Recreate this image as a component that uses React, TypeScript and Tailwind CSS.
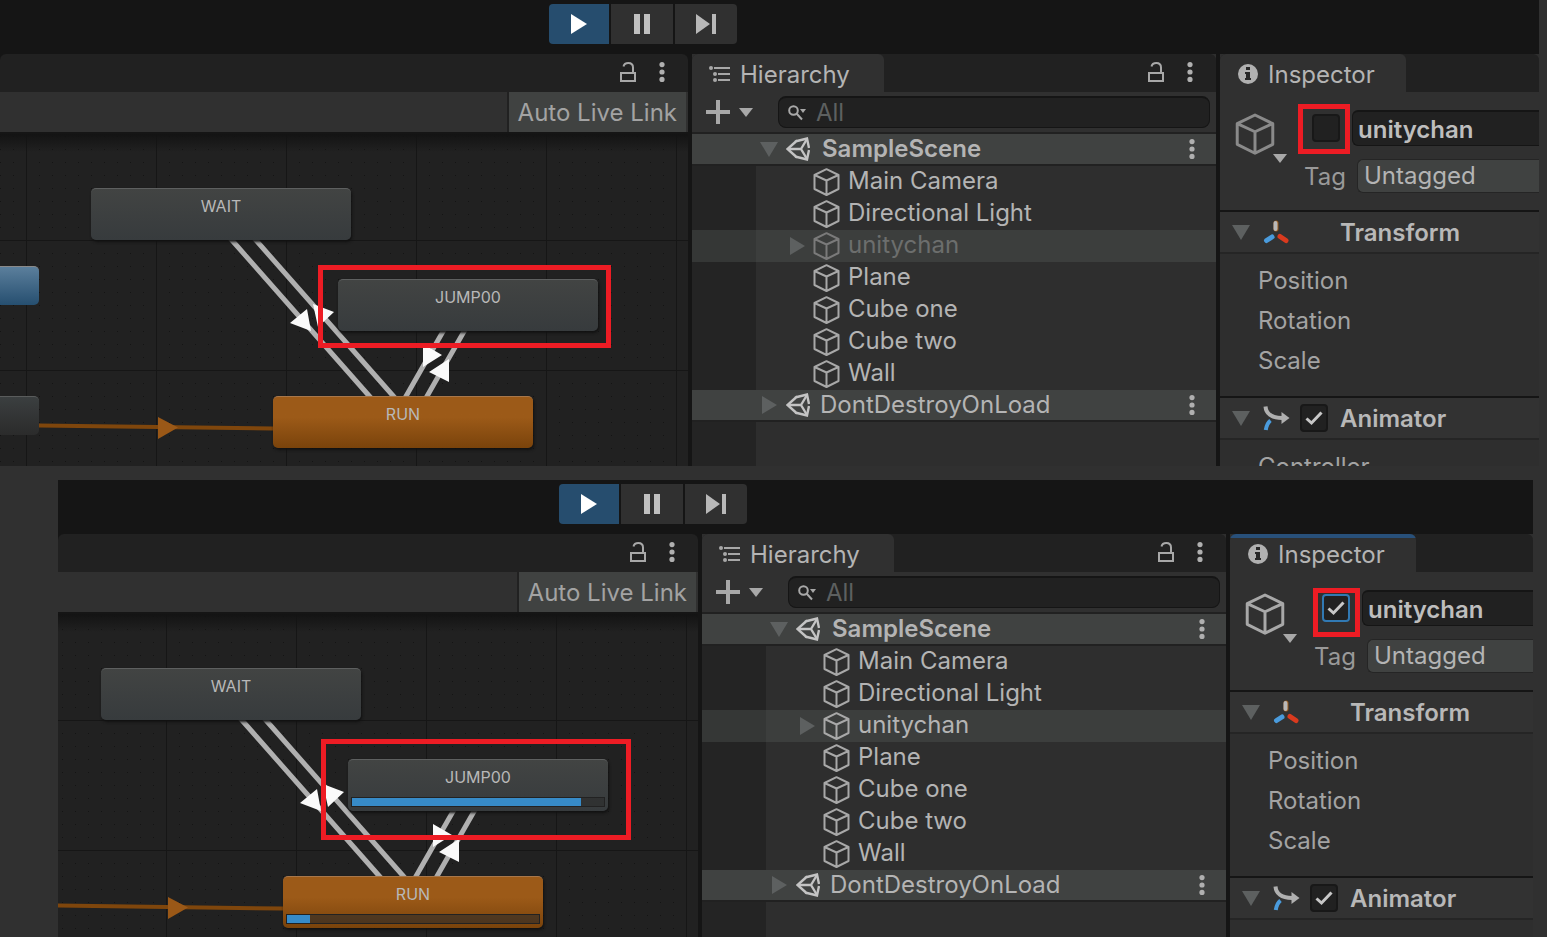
import type { ReactNode } from "react";
import clsx from "clsx";

type EditorProps = {
  id: string;
  running: boolean;
  className: string;
  transportClass: string;
  inspectorClass: string;
};

const sceneObjects = ["Main Camera", "Directional Light", "unitychan", "Plane", "Cube one", "Cube two", "Wall"];

/* Icons */

const LockIcon = () => (
  <svg width="16" height="20" viewBox="0 0 16 20" fill="none" stroke="#a8a8a8" strokeWidth="2">
    <rect x="1" y="11" width="14" height="8" />
    <path d="M3.5 4.5C4 2 6 1 8.300 1 11.500 1 13 3 13 5.500V11" />
  </svg>
);

const DotsIcon = () => (
  <svg width="6" height="20" viewBox="0 0 6 20" fill="#b0b0b0">
    <circle cx="3" cy="2.6" r="2.6" />
    <circle cx="3" cy="10" r="2.6" />
    <circle cx="3" cy="17.4" r="2.6" />
  </svg>
);

const ListIcon = () => (
  <svg width="22" height="18" viewBox="0 0 22 18" fill="#a8a8a8">
    <circle cx="3" cy="2" r="2" />
    <circle cx="7" cy="8" r="2" />
    <circle cx="7" cy="14" r="2" />
    <path d="M6 1h16v2H6zM10 7h12v2H10zM10 13h12v2H10z" />
  </svg>
);

const CubeIcon = ({ className }: { className: string }) => (
  <svg className={className} viewBox="0 0 27 28" fill="none" strokeLinejoin="round">
    <path d="M13.500 1.200 25.500 7v14l-12 6-12-6V7zM1.500 7l12 5.500L25.500 7M13.500 12.500V27" />
  </svg>
);

const UnityIcon = () => (
  <svg width="24" height="24" viewBox="0 0 24 24" fill="none" stroke="#c4c4c4" strokeWidth="2.4">
    <path d="M9 4.500 21 1.500 23 11M23 13 21 22.500 9 19.500M11 3.500 1.500 12 11 20.500" />
    <path d="M2 12h13M15 12 21 2M15 12l6 10" />
  </svg>
);

const Triangle = ({ open }: { open?: boolean }) => (
  <svg width="18" height="18" viewBox="0 0 18 18" fill="#5d6060">
    <path d={open ? "M0 2h18L9 17z" : "M2 0v18l15-9z"} />
  </svg>
);

const Caret = () => (
  <svg width="14" height="9" viewBox="0 0 14 9" fill="#a8a8a8">
    <path d="M0 0h14L7 9z" />
  </svg>
);

const TransformIcon = () => (
  <svg width="26" height="24" viewBox="0 0 26 24" strokeLinecap="round" strokeWidth="5">
    <path d="M13 3v6" stroke="#9a5817" />
    <path d="M12.500 3v6" stroke="#b8b8b8" strokeWidth="4" />
    <path d="m9 17-5.500 3.500" stroke="#4a9bdc" />
    <path d="m17 16.500 6 4" stroke="#d93a1e" />
  </svg>
);

const AnimatorIcon = () => (
  <svg width="27" height="26" viewBox="0 0 27 26" fill="none">
    <path d="M2.500 1.500C3 8 8 13 19 13" stroke="#b0b0b0" strokeWidth="4" />
    <path d="M18.500 7v12l8-6z" fill="#b0b0b0" />
    <path d="M7.500 15.500C5 17.500 3.500 20 2.800 25" stroke="#4a9bdc" strokeWidth="4" />
  </svg>
);

/* Shared parts */

const TabBar = ({ children, actions }: { children?: ReactNode; actions?: boolean }) => (
  <div className="flex h-[38px] shrink-0 justify-between rounded-t-md bg-[#212121]">
    <div className="flex">{children}</div>
    {actions && (
      <div className="flex items-center gap-[23px] pr-[23px] pb-[2px]">
        <button aria-label="Lock panel"><LockIcon /></button>
        <button aria-label="Panel menu"><DotsIcon /></button>
      </div>
    )}
  </div>
);

const Toggle = ({ label, checked, focused }: { label: string; checked: boolean; focused?: boolean }) => (
  <span className="relative block size-7 shrink-0">
    <input
      type="checkbox"
      aria-label={label}
      defaultChecked={checked}
      className={clsx(
        "peer block size-7 appearance-none rounded border-2 bg-[#212121]",
        focused ? "border-[#3179b3]" : "border-[#181818]"
      )}
    />
    <svg
      className="pointer-events-none absolute inset-0 hidden peer-checked:block"
      viewBox="0 0 28 28"
      fill="none"
      stroke="#c8c8c8"
      strokeWidth="3"
    >
      <path d="m6.500 14.500 5 4.500L21.500 8.500" />
    </svg>
  </span>
);

/* Animator graph */

const StateNode = ({ name, className, progress }: { name: string; className: string; progress?: number }) => (
  <div
    className={clsx(
      "absolute h-[52px] w-[260px] rounded-[5px] border-t bg-linear-to-b pt-[5px] text-center text-base leading-6 text-[#b8b8b8] shadow-[1px_2px_3px_#111111]",
      className
    )}
  >
    {name}
    {progress !== undefined && (
      <div className="absolute inset-x-[3px] bottom-[4px] h-[10px] border border-[#222222] bg-[#2b2b2b]/60">
        <div className="h-full bg-[#378bc8]" style={{ width: `${progress}%` }} />
      </div>
    )}
  </div>
);

const Graph = ({ id, running }: { id: string; running: boolean }) => (
  <section className="flex min-w-0 flex-1 flex-col">
    <TabBar actions />
    <div className="flex h-[42px] shrink-0 justify-end border-b-2 border-[#151515] bg-[#303030] pr-[2px]">
      <button className="border-l-2 border-[#212121] bg-[#404241] px-[9px] pt-[2px] text-2xl text-[#a3a3a3]">
        Auto Live Link
      </button>
    </div>
    <div className="relative flex-1 overflow-hidden bg-[#212121]">
      <div className="absolute inset-y-0 right-0 w-[688px]">
        <svg className="absolute inset-0 size-full">
          <defs>
            <pattern id={`${id}-dots`} x="0" y="2" width="13" height="13" patternUnits="userSpaceOnUse">
              <rect width="1" height="1" fill="#141414" />
            </pattern>
            <pattern id={`${id}-grid`} x="26" y="106" width="130" height="130" patternUnits="userSpaceOnUse">
              <path d="M0 .5h130M.5 0v130" stroke="#161616" />
            </pattern>
            <linearGradient id={`${id}-shade`} x2="0" y2="1">
              <stop stopColor="#131313" />
              <stop offset="1" stopColor="#131313" stopOpacity="0" />
            </linearGradient>
          </defs>
          <rect width="100%" height="100%" fill={`url(#${id}-dots)`} />
          <rect width="100%" height="100%" fill={`url(#${id}-grid)`} />
          <rect width="100%" height="18" fill={`url(#${id}-shade)`} />
          <g stroke="#b0b0b0" strokeWidth="5">
            <path d="M230 104 371 264M254 104 395 264M445 194 405 264M466 194 426 264" />
          </g>
          <g fill="#fafafa">
            <path d="M290 189 307 175 311 197zM313 170 334 178 318 193z" />
            <path d="M423 210 442 221 423 233zM429 238 449 225 449 248z" />
          </g>
          <path d="M39 291.500 273 294.500" stroke="#7f460c" strokeWidth="4" />
          <path d="M158 283 178 293.500 158 305z" fill="#9a5817" />
        </svg>
        <div className="absolute left-0 top-[132px] h-[39px] w-[39px] rounded-r-[5px] border-t border-[#8a8a8a] bg-linear-to-b from-[#5b7f9c] to-[#264f70]" />
        <div className="absolute left-0 top-[262px] h-[39px] w-[39px] rounded-r-[5px] border-t border-[#5a5c5c] bg-linear-to-b from-[#3b3f40] to-[#2b2b2b]" />
        <StateNode name="WAIT" className="left-[91px] top-[54px] border-[#5e6060] from-[#424443] to-[#373b3d]" />
        <StateNode
          name="JUMP00"
          className="left-[338px] top-[145px] border-[#5e6060] from-[#424443] to-[#373b3d]"
          progress={running ? 91 : undefined}
        />
        <StateNode
          name="RUN"
          className="left-[273px] top-[262px] border-[#a8774a] from-[#9c5a18] from-40% to-[#7a430b]"
          progress={running ? 9 : undefined}
        />
        <div
          className={clsx(
            "absolute border-5 border-[#ed1c24]",
            running ? "left-[311px] top-[125px] h-[101px] w-[310px]" : "left-[318px] top-[131px] h-[83px] w-[293px]"
          )}
        />
      </div>
    </div>
  </section>
);

/* Hierarchy */

const SceneRow = ({ name, open }: { name: string; open?: boolean }) => (
  <div className="flex h-8 items-center border-b-2 border-[#212121] bg-[#404241] pr-[21px] pl-[68px]">
    <Triangle open={open} />
    <span className={clsx("ml-2", open ? "mr-3" : "mr-[10px]")}><UnityIcon /></span>
    <span className={clsx("flex-1", open && "font-semibold")}>{name}</span>
    <button aria-label={`${name} menu`}><DotsIcon /></button>
  </div>
);

const Hierarchy = ({ running }: { running: boolean }) => (
  <section className="flex w-[524px] shrink-0 flex-col bg-[#2e2e2e] text-2xl text-[#b4b4b4]">
    <TabBar actions>
      <h2 className="flex w-48 items-center gap-[10px] rounded-t-md bg-[#303030] pt-1 pl-4">
        <ListIcon />
        Hierarchy
      </h2>
    </TabBar>
    <div className="flex h-[42px] shrink-0 items-center border-b-2 border-[#212121] bg-[#303030] pr-[6px] pl-[14px]">
      <button aria-label="Create" className="flex items-center gap-[9px]">
        <svg width="24" height="24" fill="#a8a8a8">
          <path d="M10 0h4v10h10v4H14v10h-4V14H0v-4h10z" />
        </svg>
        <Caret />
      </button>
      <label className="ml-[25px] flex h-8 min-w-0 flex-1 items-center gap-[9px] rounded-lg border border-t-2 border-[#151515] bg-[#212121] pl-[9px]">
        <svg width="19" height="16" viewBox="0 0 19 16" fill="none" stroke="#a8a8a8" strokeWidth="2">
          <circle cx="5.500" cy="5.500" r="4.300" />
          <path d="m8.500 8.500 5.500 6" />
          <path d="M12 4h6l-3 4z" fill="#a8a8a8" stroke="none" />
        </svg>
        <input type="search" aria-label="Search hierarchy" placeholder="All" className="min-w-0 flex-1 bg-transparent leading-7 outline-none placeholder:text-[#5d6060]" />
      </label>
    </div>
    <SceneRow name="SampleScene" open />
    <ul>
      {sceneObjects.map((name) => {
        const selected = name === "unitychan";
        const dimmed = selected && !running;
        return (
          <li key={name} className={clsx("flex h-8", selected && "bg-[#3c3e3d]")}>
            <div className={clsx("w-16", selected ? "bg-[#353736]" : "bg-[#242424]")} />
            <div className="flex flex-1 items-center pl-8">
              <span className="w-[25px]">{selected && <Triangle />}</span>
              <CubeIcon className={clsx("h-7 w-[27px] stroke-2", dimmed ? "stroke-[#7a7a7a]" : "stroke-[#a8a8a8]")} />
              <span className={clsx("ml-2 pb-[2px]", dimmed && "text-[#6c6e6d]")}>{name}</span>
            </div>
          </li>
        );
      })}
    </ul>
    <SceneRow name="DontDestroyOnLoad" />
    <div className="w-16 flex-1 bg-[#242424]" />
  </section>
);

/* Inspector */

const ComponentHeader = ({ title, icon, toggle }: { title: string; icon: ReactNode; toggle?: boolean }) => (
  <div className="flex h-11 items-center border-y-2 border-t-[#151515] border-b-[#252525] bg-[#323232] pl-3">
    <Triangle open />
    <span className="ml-[13px] w-[37px]">{icon}</span>
    <span className="w-10">{toggle && <Toggle label={`${title} enabled`} checked />}</span>
    <h3 className="pt-[2px] font-semibold text-[#b8b8b8]">{title}</h3>
  </div>
);

const Inspector = ({ id, running, className }: { id: string; running: boolean; className: string }) => (
  <section className={clsx("shrink-0 overflow-hidden bg-[#2e2e2e] text-2xl text-[#b4b4b4]", className)}>
    <TabBar>
      <h2 className="relative flex w-[186px] items-center gap-[10px] overflow-hidden rounded-t-md bg-[#303030] pt-1 pl-[18px]">
        {running && <span className="absolute inset-x-0 top-0 h-1 bg-[#28507a]" />}
        <svg className="mb-[2px]" width="20" height="20" viewBox="0 0 20 20">
          <circle cx="10" cy="10" r="10" fill="#b0b0b0" />
          <path d="M8 3h4v3H8zM7 8h5v6h1v2H7v-2h1v-4H7z" fill="#282828" />
        </svg>
        Inspector
      </h2>
    </TabBar>
    <div className="flex h-[118px] bg-[#303030] pt-[18px] pl-[15px]">
      <button aria-label="Object icon" className="flex w-[69px] items-end self-start pt-[3px]">
        <CubeIcon className={clsx("h-[42px] w-10 stroke-2", running ? "stroke-[#a8a8a8]" : "stroke-[#8a8a8a]")} />
        <span className="-mb-2 -ml-[2px]"><Caret /></span>
      </button>
      <div className="flex min-w-0 flex-1 flex-col gap-[13px]">
        <div className="flex pl-2">
          <div className="relative mt-1 mr-3 self-start">
            <Toggle label="Active" checked={running} focused={running} />
            <div
              className={clsx(
                "pointer-events-none absolute border-5 border-[#ed1c24]",
                running ? "-left-[9px] -top-[6px] h-[49px] w-[47px]" : "-left-[14px] -top-[10px] h-[50px] w-[52px]"
              )}
            />
          </div>
          <input
            aria-label="Object name"
            defaultValue="unitychan"
            className="h-9 min-w-0 flex-1 rounded-l-md border border-r-0 border-t-2 border-[#151515] bg-[#212121] pt-[2px] pl-[5px] font-semibold text-[#bebebe] outline-none"
          />
        </div>
        <div className="flex h-[34px] items-center">
          <label htmlFor={`${id}-tag`} className="w-[53px] pt-[2px] text-[#999999]">Tag</label>
          <select
            id={`${id}-tag`}
            className="h-[34px] min-w-0 flex-1 appearance-none rounded-l-md border border-r-0 border-[#252525] bg-[#404241] pl-[6px] leading-8"
          >
            <option>Untagged</option>
          </select>
        </div>
      </div>
    </div>
    <ComponentHeader title="Transform" icon={<TransformIcon />} />
    <div className="flex h-[142px] flex-col pt-[7px] pl-[38px] leading-10 text-[#a3a3a3]">
      <span>Position</span>
      <span>Rotation</span>
      <span>Scale</span>
    </div>
    <ComponentHeader title="Animator" icon={<AnimatorIcon />} toggle />
    {!running && <div className="pt-[7px] pl-[38px] leading-10 text-[#a3a3a3]">Controller</div>}
  </section>
);

const Editor = ({ id, running, className, transportClass, inspectorClass }: EditorProps) => (
  <div className={clsx("flex min-h-0 flex-col overflow-hidden bg-[#151515]", className)}>
    <div className={clsx("flex h-[54px] shrink-0 gap-[2px] pt-1", transportClass)}>
      <button aria-label="Play" className="flex h-10 w-[60px] items-center justify-center rounded-l bg-[#264d6e]">
        <svg width="16" height="20" fill="#ffffff"><path d="M0 0v20l16-10z" /></svg>
      </button>
      <button aria-label="Pause" className="flex h-10 w-[62px] items-center justify-center bg-[#303030]">
        <svg width="16" height="20" fill="#c0c0c0"><path d="M0 0h6v20H0zM10 0h6v20h-6z" /></svg>
      </button>
      <button aria-label="Step" className="flex h-10 w-[62px] items-center justify-center rounded-r bg-[#303030]">
        <svg width="20" height="20" fill="#b8b8b8"><path d="M0 0v20l14-10zM16 0h4v20h-4z" /></svg>
      </button>
    </div>
    <div className="flex min-h-0 flex-1 gap-1">
      <Graph id={id} running={running} />
      <Hierarchy running={running} />
      <Inspector id={id} running={running} className={inspectorClass} />
    </div>
  </div>
);

export default function App() {
  return (
    <main className="grid h-screen grid-rows-[466fr_457fr] gap-[14px] overflow-hidden bg-[#303030] font-['Inter',sans-serif]">
      <Editor id="stopped" running={false} className="mr-2" transportClass="pl-[549px]" inspectorClass="w-[319px]" />
      <Editor id="running" running className="mr-[14px] ml-[58px]" transportClass="pl-[501px]" inspectorClass="w-[303px]" />
    </main>
  );
}
